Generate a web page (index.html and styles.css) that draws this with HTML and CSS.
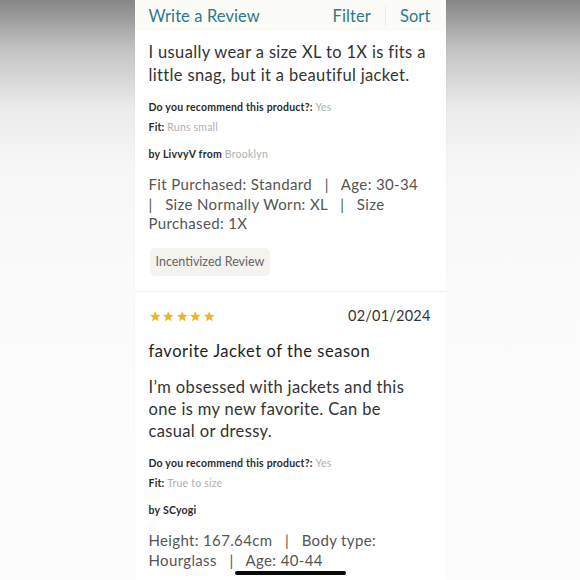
FILE: index.html
```html
<!DOCTYPE html>
<html lang="en">
<head>
<meta charset="utf-8">
<title>Reviews</title>
<link rel="stylesheet" href="styles.css">
</head>
<body>
<div class="phone">
  <header class="toolbar">
    <span class="link">Write a Review</span>
    <div class="actions">
      <span class="link">Filter</span>
      <span class="sep"></span>
      <span class="link">Sort</span>
    </div>
  </header>

  <section class="review first">
    <p class="body">I usually wear a size XL to 1X is fits a little snag, but it a beautiful jacket.</p>
    <div class="meta">
      <p class="meta-line">Do you recommend this product?: <span class="val">Yes</span></p>
      <p class="meta-line">Fit: <span class="val">Runs small</span></p>
    </div>
    <p class="by">by LivvyV from <span class="val">Brooklyn</span></p>
    <p class="attrs">Fit Purchased: Standard&nbsp;&nbsp; |&nbsp;&nbsp; Age: 30-34&nbsp;&nbsp; |&nbsp;&nbsp; Size Normally Worn: XL&nbsp;&nbsp; |&nbsp;&nbsp; Size Purchased: 1X</p>
    <span class="badge">Incentivized Review</span>
  </section>

  <section class="review second">
    <div class="top">
      <div class="stars">
        <svg viewBox="0 0 24 24"><path d="M12 2.5l2.9 6.6 7.1.6-5.4 4.7 1.6 7-6.2-3.7-6.2 3.7 1.6-7L2 9.7l7.1-.6z"/></svg>
        <svg viewBox="0 0 24 24"><path d="M12 2.5l2.9 6.6 7.1.6-5.4 4.7 1.6 7-6.2-3.7-6.2 3.7 1.6-7L2 9.7l7.1-.6z"/></svg>
        <svg viewBox="0 0 24 24"><path d="M12 2.5l2.9 6.6 7.1.6-5.4 4.7 1.6 7-6.2-3.7-6.2 3.7 1.6-7L2 9.7l7.1-.6z"/></svg>
        <svg viewBox="0 0 24 24"><path d="M12 2.5l2.9 6.6 7.1.6-5.4 4.7 1.6 7-6.2-3.7-6.2 3.7 1.6-7L2 9.7l7.1-.6z"/></svg>
        <svg viewBox="0 0 24 24"><path d="M12 2.5l2.9 6.6 7.1.6-5.4 4.7 1.6 7-6.2-3.7-6.2 3.7 1.6-7L2 9.7l7.1-.6z"/></svg>
      </div>
      <span class="date">02/01/2024</span>
    </div>
    <h2 class="title">favorite Jacket of the season</h2>
    <p class="body">I’m obsessed with jackets and this one is my new favorite. Can be casual or dressy.</p>
    <div class="meta">
      <p class="meta-line">Do you recommend this product?: <span class="val">Yes</span></p>
      <p class="meta-line">Fit: <span class="val">True to size</span></p>
    </div>
    <p class="by">by SCyogi</p>
    <p class="attrs">Height: 167.64cm&nbsp;&nbsp; |&nbsp;&nbsp; Body type: Hourglass&nbsp;&nbsp; |&nbsp;&nbsp; Age: 40-44</p>
  </section>
</div>
<div class="home-indicator"></div>
</body>
</html>
```

FILE: styles.css
```css
html, body {
  margin: 0;
  padding: 0;
  height: 100%;
}
body {
  background: linear-gradient(to bottom, #868686 0px, #c4c4c4 50px, #ececec 110px, #f7f7f7 170px, #fbfbfb 300px, #fcfcfc 580px);
  font-family: Lato, "Open Sans", sans-serif;
  overflow: hidden;
}
.phone {
  width: 311px;
  height: 580px;
  margin: 0 auto;
  background: #ffffff;
  box-shadow: 0 0 2px rgba(0,0,0,0.05);
  overflow: hidden;
}
.toolbar {
  height: 31px;
  background: #fbfbf8;
  display: flex;
  align-items: center;
  justify-content: space-between;
  padding: 0 15px 0 14px;
}
.link {
  color: #2e7a87;
  font-size: 16.5px;
  letter-spacing: 0.1px;
}
.actions {
  display: flex;
  align-items: center;
}
.sep {
  width: 1px;
  height: 20px;
  background: #ececec;
  margin: 0 14px;
}
.review {
  padding: 0 15px 0 14px;
}
.review p {
  margin: 0;
}
.first {
  padding-top: 10px;
  padding-bottom: 15px;
  border-bottom: 1px solid #eeeeee;
}
.body {
  font-size: 16.5px;
  line-height: 23px;
  color: #333333;
  letter-spacing: 0.35px;
}
.meta {
  margin-top: 10px;
}
.meta-line {
  font-size: 10.5px;
  line-height: 20px;
  color: #2a2a2a;
  font-weight: 700;
  letter-spacing: 0.2px;
}
.val {
  color: #b0b0b0;
  font-weight: 400;
}
.by {
  margin-top: 7px !important;
  font-size: 10.5px;
  line-height: 20px;
  color: #2a2a2a;
  font-weight: 700;
  letter-spacing: 0.25px;
}
.attrs {
  margin-top: 11px !important;
  font-size: 15px;
  line-height: 19.5px;
  color: #555555;
  letter-spacing: 0.35px;
}
.badge {
  display: inline-block;
  margin-top: 14px;
  margin-left: 1px;
  background: #f4f3ef;
  border-radius: 5px;
  padding: 0 6px;
  height: 28px;
  line-height: 28px;
  font-size: 12.5px;
  color: #666666;
}
.second {
  padding-top: 13px;
}
.top {
  display: flex;
  justify-content: space-between;
  align-items: center;
  height: 22px;
}
.stars {
  display: flex;
  gap: 1px;
  padding-top: 2px;
}
.stars svg {
  width: 12.5px;
  height: 12.5px;
  fill: #eab728;
}
.date {
  font-size: 14.5px;
  color: #333333;
  letter-spacing: 0.2px;
}
.title {
  margin: 13px 0 0;
  font-size: 16.5px;
  line-height: 22px;
  font-weight: 400;
  color: #1e1e1e;
  letter-spacing: 0.55px;
}
.second .body {
  margin-top: 14px;
  line-height: 22px;
}
.second .meta {
  margin-top: 11px;
}
.second .by {
  margin-top: 7px !important;
}
.second .attrs {
  margin-top: 10px !important;
  line-height: 20px;
}
.home-indicator {
  position: fixed;
  left: 235px;
  bottom: 5px;
  width: 111px;
  height: 4px;
  border-radius: 2px;
  background: #0a0a0a;
}
```
